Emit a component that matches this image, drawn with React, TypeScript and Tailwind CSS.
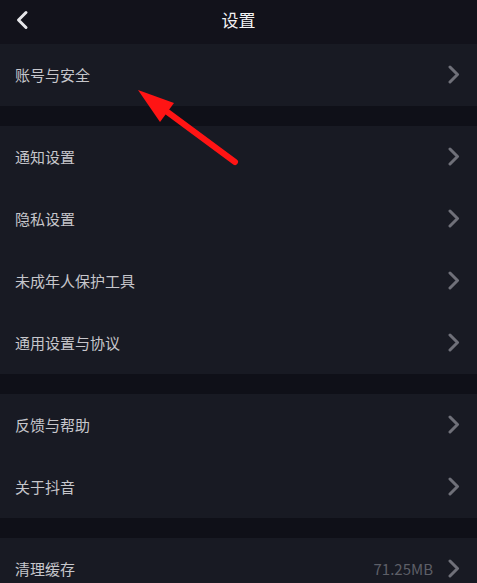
const groups: { label: string; value?: string }[][] = [
  [{ label: "账号与安全" }],
  [
    { label: "通知设置" },
    { label: "隐私设置" },
    { label: "未成年人保护工具" },
    { label: "通用设置与协议" },
  ],
  [{ label: "反馈与帮助" }, { label: "关于抖音" }],
  [{ label: "清理缓存", value: "71.25MB" }],
];

function Chevron() {
  return (
    <svg width="12" height="19" viewBox="0 0 12 19" fill="none">
      <path d="M2 2l7.5 7.5L2 17" stroke="#6f7079" strokeWidth="3" strokeLinecap="round" strokeLinejoin="round" />
    </svg>
  );
}

export default function App() {
  return (
    <div
      className="relative w-[477px] h-[583px] overflow-hidden bg-[#0f1018] text-[#c6c6cb]"
      style={{ fontFamily: '"Noto Sans CJK SC", "Noto Sans", sans-serif' }}
    >
      {/* Header */}
      <div className="relative flex h-[44px] justify-center pt-[11px] bg-[#12121b]">
        <button className="absolute left-[15px] top-[10px]">
          <svg width="14" height="20" viewBox="0 0 14 20" fill="none">
            <path d="M11 2.5L3.5 10l7.5 7.5" stroke="#e6e6ea" strokeWidth="3" strokeLinecap="round" strokeLinejoin="round" />
          </svg>
        </button>
        <h1 className="text-[17px] text-[#f2f2f4] leading-[18px]">设置</h1>
      </div>

      <div className="flex flex-col gap-[20px]">
        {groups.map((items, gi) => (
          <div key={gi} className="bg-[#181a23]">
            {items.map((item) => (
              <div key={item.label} className="flex h-[62px] items-center pl-[15px] pr-[17px] pb-[2px]">
                <span className="flex-1 text-[15px] leading-none">{item.label}</span>
                {item.value && (
                  <span className="mr-[15px] text-[15px] leading-none text-[#5d5f67]">{item.value}</span>
                )}
                <Chevron />
              </div>
            ))}
          </div>
        ))}
      </div>

      {/* Annotation arrow */}
      <svg className="absolute left-0 top-0 pointer-events-none" width="477" height="583">
        <line x1="235" y1="162" x2="162" y2="108" stroke="#ff1414" strokeWidth="6" strokeLinecap="round" />
        <polygon points="138,90 174,103 160,122" fill="#ff1414" />
      </svg>
    </div>
  );
}
